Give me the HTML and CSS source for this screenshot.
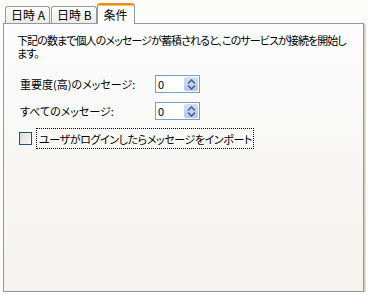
FILE: index.html
```html
<!DOCTYPE html>
<html lang="ja">
<head>
    <meta charset="UTF-8">
    <title>条件</title>
    <link rel="stylesheet" href="styles.css">
</head>
<body>
<div class="tabctl">
    <div class="tabs">
        <div class="tab">日時 A</div>
        <div class="tab">日時 B</div>
        <div class="tab active">条件</div>
    </div>
    <div class="panel">
        <p class="intro">下記の数まで個人のメッセージが蓄積されると、このサービスが接続を開始し<br>ます。</p>
        <div class="rows">
            <label class="lbl" for="high">重要度(高)のメッセージ:</label>
            <div class="spin">
                <input id="high" type="text" value="0">
                <span class="spin-btn">
                    <svg width="9" height="11" viewBox="0 0 9 11"><path d="M1 4.5 L4.5 1 L8 4.5 M1 6.5 L4.5 10 L8 6.5" fill="none" stroke="#4d6185" stroke-width="1.6"/></svg>
                </span>
            </div>
            <label class="lbl" for="all">すべてのメッセージ:</label>
            <div class="spin">
                <input id="all" type="text" value="0">
                <span class="spin-btn">
                    <svg width="9" height="11" viewBox="0 0 9 11"><path d="M1 4.5 L4.5 1 L8 4.5 M1 6.5 L4.5 10 L8 6.5" fill="none" stroke="#4d6185" stroke-width="1.6"/></svg>
                </span>
            </div>
        </div>
        <div class="check">
            <span class="box"></span>
            <span class="check-text">ユーザがログインしたらメッセージをインポート</span>
        </div>
    </div>
</div>
</body>
</html>
```

FILE: styles.css
```css
body {
    margin: 0;
    background: #fcfcfb;
    font-family: "Noto Sans CJK JP", "Liberation Sans", sans-serif;
    font-size: 11px;
    color: #000000;
}

.tabctl {
    padding: 3px 0 0 3px;
}

.tabs {
    display: flex;
    align-items: flex-end;
    height: 20px;
    padding-left: 2px;
}

.tab {
    height: 16px;
    line-height: 16px;
    padding: 0 4px 0 5px;
    margin-right: 1px;
    border: 1px solid #919b9c;
    border-bottom: none;
    border-radius: 3px 3px 0 0;
    background: linear-gradient(#ffffff, #ecebe5);
    font-size: 12px;
    white-space: nowrap;
}

.tab.active {
    height: 19px;
    line-height: 20px;
    padding: 0 6px;
    margin: 0 0 -1px -1px;
    position: relative;
    border-top: 2px solid #e68b2c;
    box-shadow: inset 0 1px 0 #ffc73c;
    background: #fcfcfe;
}

.panel {
    width: 359px;
    height: 267px;
    border: 1px solid #919b9c;
    background: linear-gradient(#fcfcfe, #f4f3ee);
    box-shadow: 1px 1px 0 #d0cdb8, 2px 2px 0 #e3e0d0;
    padding: 0;
}

.intro {
    margin: 10px 0 0 13px;
    line-height: 13px;
    font-feature-settings: "palt";
    letter-spacing: -0.9px;
    white-space: nowrap;
}

.rows {
    display: grid;
    grid-template-columns: 135px 45px;
    row-gap: 9px;
    align-items: center;
    margin: 15px 0 0 16px;
}

.lbl {
    font-feature-settings: "palt";
}

.spin {
    position: relative;
    height: 16px;
    border: 1px solid #7f9db9;
    background: #ffffff;
}

.spin input {
    width: 24px;
    height: 16px;
    border: none;
    padding: 0 0 0 2px;
    margin: 0;
    font: inherit;
    background: transparent;
    outline: none;
}

.spin-btn {
    position: absolute;
    right: 1px;
    top: 1px;
    width: 14px;
    height: 14px;
    border-radius: 2px;
    background: linear-gradient(#d3def9, #b2c5f2);
    border: none;
    display: flex;
    align-items: center;
    justify-content: center;
}

.check {
    display: flex;
    align-items: center;
    margin: 8px 0 0 15px;
}

.box {
    width: 11px;
    height: 11px;
    border: 1px solid #1c5180;
    background: linear-gradient(135deg, #dcdbd5, #fbfbfa);
}

.check-text {
    margin-left: 4px;
    padding: 2px 1px 1px 2px;
    border: 1px dotted #000000;
    font-feature-settings: "palt";
    letter-spacing: -0.4px;
    white-space: nowrap;
}
```
